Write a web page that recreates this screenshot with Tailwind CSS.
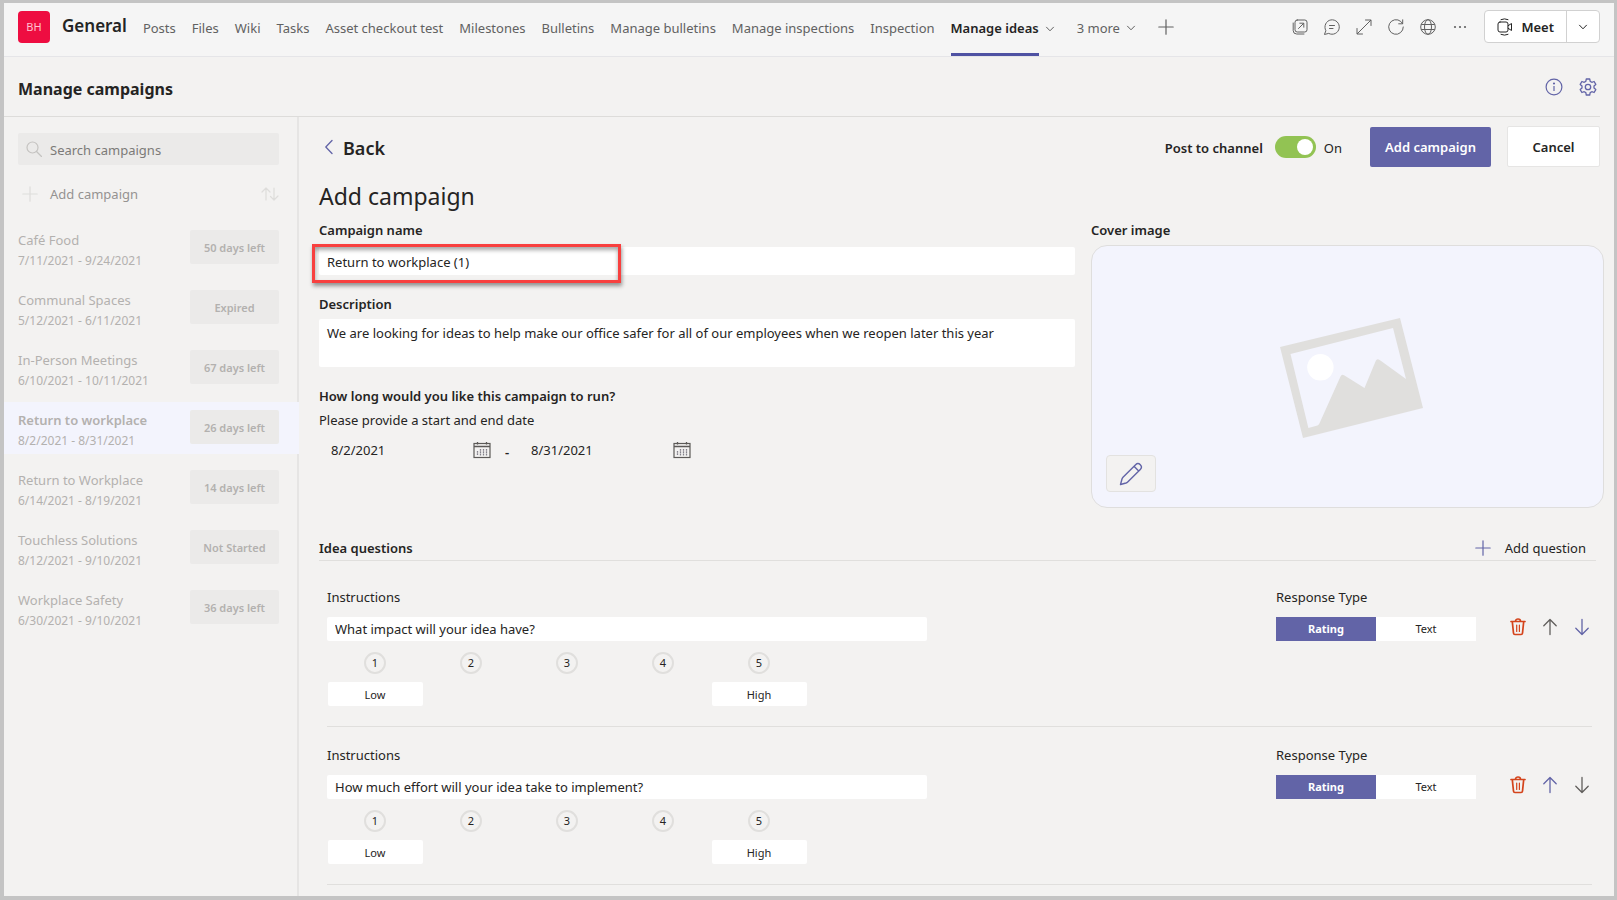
<!DOCTYPE html>
<html lang="en">
<head>
<meta charset="utf-8">
<meta name="viewport" content="width=device-width, initial-scale=1">
<title>Manage campaigns</title>
<script src="https://cdn.jsdelivr.net/npm/@tailwindcss/browser@4"></script>
</head>
<body class="font-['Noto_Sans','Open_Sans',sans-serif] text-[13px] leading-5 text-[#252423]">

<!-- Icon library -->
<svg class="hidden" aria-hidden="true">
  <symbol id="i-chevron" viewBox="0 0 10 10"><path d="M1.500 3.200 5 6.800l3.500-3.600" fill="none" stroke="currentColor" stroke-linecap="round" stroke-linejoin="round"/></symbol>
  <symbol id="i-plus" viewBox="0 0 16 16"><path d="M8 .8v14.400M.8 8h14.400" fill="none" stroke="currentColor" stroke-width="1.200" stroke-linecap="round"/></symbol>
  <symbol id="i-trash" viewBox="0 0 18 20"><g fill="none" stroke="currentColor" stroke-width="1.700" stroke-linecap="round" stroke-linejoin="round"><path d="M2 4.500h14M6.500 4.300C6.500 1.200 11.500 1.200 11.500 4.300M3.300 4.700l1.200 11.500c.1.900.6 1.300 1.400 1.300h6.200c.8 0 1.300-.4 1.400-1.300l1.200-11.500"/><path d="M7.700 8v6.500M10.400 8v6.500" stroke-width="1.200"/></g></symbol>
  <symbol id="i-up" viewBox="0 0 16 18"><path d="M8 16.500v-15M1.800 7.700 8 1.500l6.200 6.200" fill="none" stroke="currentColor" stroke-width="1.300" stroke-linecap="round" stroke-linejoin="round"/></symbol>
  <symbol id="i-down" viewBox="0 0 16 18"><path d="M8 1.500v15M1.800 10.300 8 16.500l6.200-6.200" fill="none" stroke="currentColor" stroke-width="1.300" stroke-linecap="round" stroke-linejoin="round"/></symbol>
  <symbol id="i-calendar" viewBox="0 0 18 18"><g fill="none" stroke="#5c5a58"><rect x="1" y="2.500" width="16" height="14" stroke-width="1.200"/><path d="M1 5.500h16M4.500 1v2.500M13.500 1v2.500" stroke-width="1.300"/><path d="M4.500 10v4.500M7.500 8v6.500M10.500 8v6.500M13.500 8v6.500" stroke="#85838c" stroke-width="1.300" stroke-dasharray="1.800 .5"/></g></symbol>
</svg>

<div class="flex min-h-screen flex-col border-x-4 border-t-[3px] border-b-4 border-[#c4c4c4] border-r-[3px] bg-[#f3f2f1]">

  <header class="flex h-[54px] items-start justify-between border-b border-[#e5e5e8] bg-[#f5f5f5] pr-3.5 pl-3.5 text-[#616161]">
    <div class="flex items-start">
      <div class="flex h-[47px] items-center gap-3">
        <div class="flex size-8 items-center justify-center rounded-sm bg-[#ee0d41] text-[11px] text-[#ffc2cf]">BH</div>
        <h1 class="pb-0.5 text-[17px] font-semibold text-[#242424]">General</h1>
      </div>
      <nav class="ml-4 flex h-[53px] items-stretch gap-4 whitespace-nowrap">
        <a href="#" class="flex items-center border-b-[3px] border-transparent">Posts</a>
        <a href="#" class="flex items-center border-b-[3px] border-transparent">Files</a>
        <a href="#" class="flex items-center border-b-[3px] border-transparent">Wiki</a>
        <a href="#" class="flex items-center border-b-[3px] border-transparent">Tasks</a>
        <a href="#" class="flex items-center border-b-[3px] border-transparent">Asset checkout test</a>
        <a href="#" class="flex items-center border-b-[3px] border-transparent">Milestones</a>
        <a href="#" class="flex items-center border-b-[3px] border-transparent">Bulletins</a>
        <a href="#" class="flex items-center border-b-[3px] border-transparent">Manage bulletins</a>
        <a href="#" class="flex items-center border-b-[3px] border-transparent">Manage inspections</a>
        <a href="#" class="flex items-center border-b-[3px] border-transparent">Inspection</a>
        <div class="flex gap-1.5 pr-1.5">
          <a href="#" aria-current="page" class="flex items-center border-b-[3px] border-[#4f52a3] font-semibold text-[#242424]">Manage ideas</a>
          <button aria-label="Tab options" class="flex h-[47px] items-center pt-1"><svg class="size-2.5"><use href="#i-chevron"/></svg></button>
        </div>
        <button class="flex items-center gap-1.5 border-b-[3px] border-transparent">3 more <svg class="size-2.5"><use href="#i-chevron"/></svg></button>
        <button aria-label="Add a tab" class="flex h-[47px] items-center pl-1.5"><svg class="size-4"><use href="#i-plus"/></svg></button>
      </nav>
    </div>
    <div class="flex h-[47px] shrink-0 items-center">
      <div class="flex items-center gap-4">
        <button aria-label="Open in new window"><svg class="size-4" viewBox="0 0 16 16" fill="none" stroke="currentColor" stroke-linecap="round" stroke-linejoin="round"><rect x="3" y="1" width="12" height="12" rx="2.200"/><path d="M1.200 4v7.500A3.500 3.500 0 0 0 4.700 15H12M6.500 9.500l5-5M7.800 4.200h4v4"/></svg></button>
        <button aria-label="Conversation"><svg class="size-4" viewBox="0 0 16 16" fill="none" stroke="currentColor" stroke-linecap="round" stroke-linejoin="round"><path d="M1.700 11.400A7.200 7.200 0 1 1 4.700 14.400L.8 15.400ZM5.500 6.500h5M5.500 9.500h3.500"/></svg></button>
        <button aria-label="Expand"><svg class="size-4" viewBox="0 0 16 16" fill="none" stroke="currentColor" stroke-linecap="round" stroke-linejoin="round"><path d="M1.200 14.800 14.800 1.200M9.500 1h5.500v5.500M1 9.500V15h5.500"/></svg></button>
        <button aria-label="Refresh"><svg class="size-4" viewBox="0 0 16 16" fill="none" stroke="currentColor" stroke-linecap="round" stroke-linejoin="round"><path d="M15.300 8A7.300 7.300 0 1 1 12.800 2.500L14.500 4.500M14.700.8v4h-4"/></svg></button>
        <button aria-label="Open website"><svg class="size-4" viewBox="0 0 16 16" fill="none" stroke="currentColor"><circle cx="8" cy="8" r="7.300"/><ellipse cx="8" cy="8" rx="3.500" ry="7.300"/><path d="M1.200 5.500h13.600M1.200 10.500h13.600"/></svg></button>
        <button aria-label="More options"><svg class="size-4" viewBox="0 0 16 16" fill="currentColor"><circle cx="3" cy="8" r="1.100"/><circle cx="8" cy="8" r="1.100"/><circle cx="13" cy="8" r="1.100"/></svg></button>
      </div>
      <div class="ml-4 flex h-[33px] rounded border border-[#d1d1d1] bg-white text-[#242424]">
        <button class="flex items-center gap-2 border-r border-[#d1d1d1] pr-3 pl-3 font-semibold">
          <svg class="h-[18px] w-4" viewBox="0 0 16 18" fill="none" stroke="currentColor" stroke-linejoin="round" stroke-linecap="round"><rect x="1" y="4" width="10" height="10" rx="2"/><path d="m11 7.800 3.500-2.300v7L11 10.200M4 1.600Q7.500 0 11 1.600M4 16.400q3.500 1.600 7 0"/></svg>
          Meet</button>
        <button aria-label="Meeting options" class="flex w-8 items-center justify-center"><svg class="size-2.5"><use href="#i-chevron"/></svg></button>
      </div>
    </div>
  </header>

  <div class="mr-3.5 flex h-[60px] items-center justify-between border-b border-[#dddcda] pr-[3px] pl-3.5">
    <h2 class="pt-1 text-[16px] font-bold">Manage campaigns</h2>
    <div class="flex items-center gap-4 text-[#6264a7]">
      <button aria-label="Information"><svg class="size-[18px]" viewBox="0 0 18 18" fill="none" stroke="currentColor" stroke-width="1.200"><circle cx="9" cy="9" r="7.900"/><path d="M9 8v5"/><circle cx="9" cy="5.500" r=".5" fill="currentColor"/></svg></button>
      <button aria-label="Settings"><svg class="size-[18px]" viewBox="0 0 18 18" fill="none" stroke="currentColor" stroke-width="1.300" stroke-linejoin="round"><path d="M7.300 1h3.400l.5 2.400 1.600.9 2.300-.8 1.700 2.900L15 8v2l1.800 1.600-1.700 2.900-2.300-.8-1.600.9-.5 2.400H7.300l-.5-2.400-1.600-.9-2.300.8-1.700-2.900L3 10V8L1.200 6.400l1.700-2.900 2.300.8 1.600-.9Z"/><circle cx="9" cy="9" r="2.700"/></svg></button>
    </div>
  </div>

  <div class="flex grow">

    <aside class="w-[295px] shrink-0 border-r-2 border-[#e6e5e4] pt-4 text-[#b3b1af]">
      <div class="mr-[18px] ml-3.5 flex h-8 items-center rounded-xs bg-[#ebeae9]">
        <svg class="mr-2 ml-2 size-4 text-[#c5c3c1]" viewBox="0 0 16 16" fill="none" stroke="currentColor" stroke-width="1.200" stroke-linecap="round"><circle cx="6.500" cy="6.500" r="5.500"/><path d="m10.500 10.500 5 5"/></svg>
        <input type="search" aria-label="Search campaigns" placeholder="Search campaigns" class="min-w-0 grow bg-transparent pt-0.5 outline-none placeholder:text-[#7c7a78]">
      </div>
      <div class="mr-[18px] ml-3.5 mt-[17px] flex h-6 items-center justify-between">
        <button class="flex items-center gap-3 pl-1 text-[#959391]"><svg class="size-4 text-[#dedddb]"><use href="#i-plus"/></svg>Add campaign</button>
        <button aria-label="Sort campaigns" class="text-[#dedddb]"><svg class="h-4 w-[18px]" viewBox="0 0 18 16" fill="none" stroke="currentColor" stroke-width="1.200" stroke-linecap="round" stroke-linejoin="round"><path d="M5 14V2M1 6l4-4 4 4M13 2v12M9.500 10.500 13 14l4-4"/></svg></button>
      </div>
      <ul class="mt-4 flex flex-col gap-2">
        <li class="flex h-[52px] justify-between pt-2 pr-[18px] pl-3.5"><div><p>Café Food</p><p class="mt-px text-xs leading-5">7/11/2021 - 9/24/2021</p></div><span class="flex h-[34px] w-[89px] items-center justify-center rounded-xs bg-[#ebeae9] pt-px text-[11px] font-semibold">50 days left</span></li>
        <li class="flex h-[52px] justify-between pt-2 pr-[18px] pl-3.5"><div><p>Communal Spaces</p><p class="mt-px text-xs leading-5">5/12/2021 - 6/11/2021</p></div><span class="flex h-[34px] w-[89px] items-center justify-center rounded-xs bg-[#ebeae9] pt-px text-[11px] font-semibold">Expired</span></li>
        <li class="flex h-[52px] justify-between pt-2 pr-[18px] pl-3.5"><div><p>In-Person Meetings</p><p class="mt-px text-xs leading-5">6/10/2021 - 10/11/2021</p></div><span class="flex h-[34px] w-[89px] items-center justify-center rounded-xs bg-[#ebeae9] pt-px text-[11px] font-semibold">67 days left</span></li>
        <li class="-mr-0.5 flex h-[52px] justify-between bg-[#f3f4fd] pt-2 pr-5 pl-3.5"><div><p class="font-semibold">Return to workplace</p><p class="mt-px text-xs leading-5">8/2/2021 - 8/31/2021</p></div><span class="flex h-[34px] w-[89px] items-center justify-center rounded-xs bg-[#ebeae9] pt-px text-[11px] font-semibold">26 days left</span></li>
        <li class="flex h-[52px] justify-between pt-2 pr-[18px] pl-3.5"><div><p>Return to Workplace</p><p class="mt-px text-xs leading-5">6/14/2021 - 8/19/2021</p></div><span class="flex h-[34px] w-[89px] items-center justify-center rounded-xs bg-[#ebeae9] pt-px text-[11px] font-semibold">14 days left</span></li>
        <li class="flex h-[52px] justify-between pt-2 pr-[18px] pl-3.5"><div><p>Touchless Solutions</p><p class="mt-px text-xs leading-5">8/12/2021 - 9/10/2021</p></div><span class="flex h-[34px] w-[89px] items-center justify-center rounded-xs bg-[#ebeae9] pt-px text-[11px] font-semibold">Not Started</span></li>
        <li class="flex h-[52px] justify-between pt-2 pr-[18px] pl-3.5"><div><p>Workplace Safety</p><p class="mt-px text-xs leading-5">6/30/2021 - 9/10/2021</p></div><span class="flex h-[34px] w-[89px] items-center justify-center rounded-xs bg-[#ebeae9] pt-px text-[11px] font-semibold">36 days left</span></li>
      </ul>
    </aside>

    <main class="min-w-0 grow pt-[9px] pr-2.5 pl-5">
      <div class="mr-1 flex h-[41px] items-center justify-between">
        <button class="flex items-center gap-2.5 pl-1.5 text-[18px] leading-6 font-semibold"><svg class="h-4 w-2 text-[#6264a7]" viewBox="0 0 8 16" fill="none" stroke="currentColor" stroke-width="1.300" stroke-linecap="round" stroke-linejoin="round"><path d="M7 1.500.8 8 7 14.500"/></svg><span class="pt-0.5">Back</span></button>
        <div class="flex h-full items-center">
          <label for="post" class="pt-0.5 font-semibold">Post to channel</label>
          <input id="post" type="checkbox" role="switch" checked class="mr-2 ml-3 flex h-[22px] w-[41px] appearance-none items-center justify-end rounded-full bg-[#92c353] px-[3px] before:size-4 before:rounded-full before:bg-white">
          <span class="pt-0.5">On</span>
          <button class="ml-7 h-10 w-[121px] rounded-xs bg-[#6264a7] font-semibold text-white">Add campaign</button>
          <button class="ml-4 h-[41px] w-[93px] rounded-xs border border-[#e6e5e4] bg-white font-semibold">Cancel</button>
        </div>
      </div>

      <h3 class="mt-[13px] text-[23px] leading-8">Add campaign</h3>

      <div class="mt-2 flex gap-4">
        <div class="min-w-0 grow">
          <label for="name" class="block font-semibold">Campaign name</label>
          <div class="relative mt-[7px]">
            <input id="name" value="Return to workplace (1)" class="block h-7 w-full rounded-xs bg-white px-2 pt-0.5 outline-none">
            <div class="pointer-events-none absolute -top-[3px] -left-[7px] h-[39px] w-[309px] border-[3px] border-[#f8403f] shadow-[1px_3px_4px_rgba(0,0,0,0.4),inset_0_3px_4px_rgba(0,0,0,0.35)]"></div>
          </div>
          <label for="desc" class="mt-[19px] block font-semibold">Description</label>
          <textarea id="desc" class="mt-[5px] block h-12 w-full resize-none rounded-xs bg-white px-2 pt-1 outline-none">We are looking for ideas to help make our office safer for all of our employees when we reopen later this year</textarea>
          <h4 class="mt-[19px] font-semibold">How long would you like this campaign to run?</h4>
          <p class="mt-1">Please provide a start and end date</p>
          <div class="mt-2 flex items-center">
            <div class="flex w-44 items-center pr-1 pl-3">
              <input aria-label="Start date" value="8/2/2021" class="min-w-0 grow bg-transparent outline-none">
              <button aria-label="Pick start date"><svg class="size-[18px]"><use href="#i-calendar"/></svg></button>
            </div>
            <span class="w-6 pt-1 text-center font-semibold">-</span>
            <div class="flex w-44 items-center pr-1 pl-3">
              <input aria-label="End date" value="8/31/2021" class="min-w-0 grow bg-transparent outline-none">
              <button aria-label="Pick end date"><svg class="size-[18px]"><use href="#i-calendar"/></svg></button>
            </div>
          </div>
        </div>

        <section class="w-[513px] shrink-0">
          <h4 class="font-semibold">Cover image</h4>
          <div class="relative mt-[5px] flex h-[263px] items-center justify-center rounded-2xl border border-[#dfdedd] bg-[#f3f4fd]">
            <svg class="h-[122px] w-[150px]" viewBox="0 0 150 122" role="img" aria-label="No cover image">
              <path fill="#e0dfdd" fill-rule="evenodd" d="M7 31 127 2l23 90-120 30ZM17.500 38l17.900 74 9-2.400q1.200-.6 2-2.200L67.500 60.500q1.300-3 4-1L91.500 72l11.200-27q1.200-3 4-1L133 63 120 12Z"/>
              <circle cx="47.400" cy="51.300" r="13.200" fill="#fff"/>
            </svg>
            <button aria-label="Edit cover image" class="absolute bottom-[15px] left-3.5 flex h-[37px] w-[50px] items-center justify-center rounded border border-[#e3e2e0] bg-[#f3f2f1] text-[#6264a7]">
              <svg class="size-6" viewBox="0 0 24 24" fill="none" stroke="currentColor" stroke-width="1.400" stroke-linejoin="round"><path d="M1.500 22.500 3 17q.3-1 1-1.700L16.600 2.700a3.300 3.300 0 0 1 4.700 4.700L8.700 20q-.7.700-1.700 1ZM15 4.300l4.700 4.700"/></svg>
            </button>
          </div>
        </section>
      </div>

      <div class="mt-[30px] mr-2 flex justify-between border-b border-[#e0dfdd] pb-0.5">
        <h4 class="font-semibold">Idea questions</h4>
        <button class="flex items-center gap-3.5 pr-2.5"><svg class="size-4 text-[#6264a7]"><use href="#i-plus"/></svg>Add question</button>
      </div>

      <div class="mt-2 mr-3 ml-2">
        <article class="flex justify-between border-b border-[#e0dfdd] pt-[18px] pb-5">
          <div>
            <label for="q1" class="block">Instructions</label>
            <input id="q1" value="What impact will your idea have?" class="mt-2.5 block h-6 w-[600px] rounded-xs bg-white px-2 outline-none">
            <div class="mt-[11px] grid w-[480px] grid-cols-5 justify-items-center gap-y-2 text-[11px]">
              <span class="flex size-[22px] items-center justify-center rounded-full border-2 border-[#e0dfdd]">1</span>
              <span class="flex size-[22px] items-center justify-center rounded-full border-2 border-[#e0dfdd]">2</span>
              <span class="flex size-[22px] items-center justify-center rounded-full border-2 border-[#e0dfdd]">3</span>
              <span class="flex size-[22px] items-center justify-center rounded-full border-2 border-[#e0dfdd]">4</span>
              <span class="flex size-[22px] items-center justify-center rounded-full border-2 border-[#e0dfdd]">5</span>
              <input aria-label="Label for lowest rating" value="Low" class="col-start-1 h-6 w-[95px] rounded-xs bg-white text-center outline-none">
              <input aria-label="Label for highest rating" value="High" class="col-start-5 h-6 w-[95px] rounded-xs bg-white text-center outline-none">
            </div>
          </div>
          <div>
            <p>Response Type</p>
            <div class="mt-2.5 flex h-6 items-center">
              <div class="mr-8 flex h-6 w-[200px] bg-white text-[11px]">
                <button aria-pressed="true" class="flex-1 bg-[#6264a7] font-bold text-white">Rating</button>
                <button aria-pressed="false" class="flex-1">Text</button>
              </div>
              <div class="flex gap-3 pb-1">
                <button aria-label="Delete question" class="flex w-5 justify-center text-[#d4441c]"><svg class="h-5 w-[18px]"><use href="#i-trash"/></svg></button>
                <button aria-label="Move up" class="flex w-5 items-center justify-center text-[#605e5c]"><svg class="h-[18px] w-4"><use href="#i-up"/></svg></button>
                <button aria-label="Move down" class="flex w-5 items-center justify-center text-[#6264a7]"><svg class="h-[18px] w-4"><use href="#i-down"/></svg></button>
              </div>
            </div>
          </div>
        </article>
        <article class="flex justify-between border-b border-[#e0dfdd] pt-[18px] pb-5">
          <div>
            <label for="q2" class="block">Instructions</label>
            <input id="q2" value="How much effort will your idea take to implement?" class="mt-2.5 block h-6 w-[600px] rounded-xs bg-white px-2 outline-none">
            <div class="mt-[11px] grid w-[480px] grid-cols-5 justify-items-center gap-y-2 text-[11px]">
              <span class="flex size-[22px] items-center justify-center rounded-full border-2 border-[#e0dfdd]">1</span>
              <span class="flex size-[22px] items-center justify-center rounded-full border-2 border-[#e0dfdd]">2</span>
              <span class="flex size-[22px] items-center justify-center rounded-full border-2 border-[#e0dfdd]">3</span>
              <span class="flex size-[22px] items-center justify-center rounded-full border-2 border-[#e0dfdd]">4</span>
              <span class="flex size-[22px] items-center justify-center rounded-full border-2 border-[#e0dfdd]">5</span>
              <input aria-label="Label for lowest rating" value="Low" class="col-start-1 h-6 w-[95px] rounded-xs bg-white text-center outline-none">
              <input aria-label="Label for highest rating" value="High" class="col-start-5 h-6 w-[95px] rounded-xs bg-white text-center outline-none">
            </div>
          </div>
          <div>
            <p>Response Type</p>
            <div class="mt-2.5 flex h-6 items-center">
              <div class="mr-8 flex h-6 w-[200px] bg-white text-[11px]">
                <button aria-pressed="true" class="flex-1 bg-[#6264a7] font-bold text-white">Rating</button>
                <button aria-pressed="false" class="flex-1">Text</button>
              </div>
              <div class="flex gap-3 pb-1">
                <button aria-label="Delete question" class="flex w-5 justify-center text-[#d4441c]"><svg class="h-5 w-[18px]"><use href="#i-trash"/></svg></button>
                <button aria-label="Move up" class="flex w-5 items-center justify-center text-[#6264a7]"><svg class="h-[18px] w-4"><use href="#i-up"/></svg></button>
                <button aria-label="Move down" class="flex w-5 items-center justify-center text-[#605e5c]"><svg class="h-[18px] w-4"><use href="#i-down"/></svg></button>
              </div>
            </div>
          </div>
        </article>
      </div>
    </main>
  </div>
</div>
</body>
</html>
